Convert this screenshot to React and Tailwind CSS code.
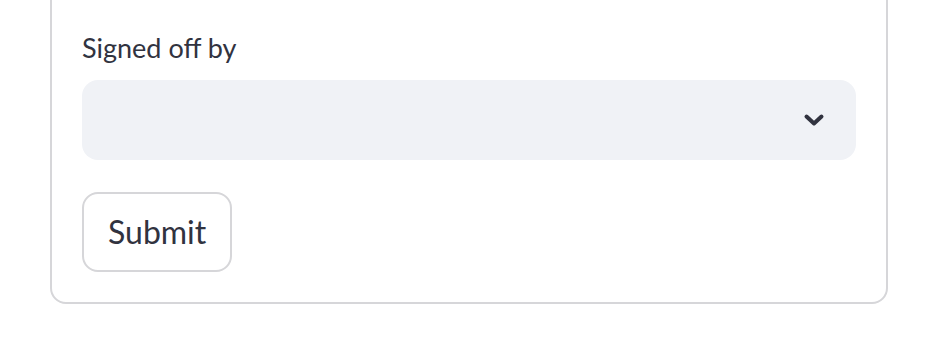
import React from "react";

const Chevron = () => (
  <svg width="24" height="16" viewBox="0 0 24 16" fill="none" aria-hidden="true">
    <path
      d="M4.5 4.5 L12 11.5 L19.5 4.5"
      stroke="#31333f"
      strokeWidth="4"
      strokeLinecap="round"
      strokeLinejoin="round"
    />
  </svg>
);

export default function App() {
  return (
    <div className="h-[358px] w-[944px] overflow-hidden bg-white font-['Lato',sans-serif] text-[#31333f]">
      <div className="-mt-[20px] ml-[50px] w-[838px] rounded-[16px] border-2 border-[#d6d6d9] px-[30px] pb-[30px] pt-[44px]">
        <label className="block text-[27px] leading-[44px]">Signed off by</label>
        <div className="mt-[10px] flex h-[80px] items-center justify-end rounded-[16px] bg-[#f0f2f6] pr-[30px]">
          <Chevron />
        </div>
        <button className="mt-[32px] flex h-[80px] items-center rounded-[16px] border-2 border-[#d6d6d9] bg-white px-[24px] text-[32px]">
          Submit
        </button>
      </div>
    </div>
  );
}
